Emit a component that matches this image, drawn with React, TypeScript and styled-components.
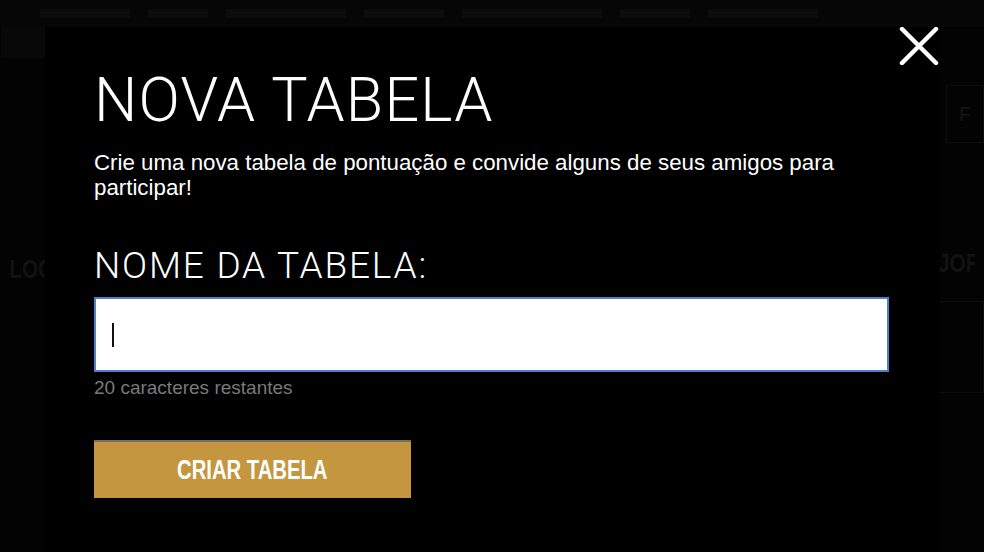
import React from "react";
import styled, { createGlobalStyle } from "styled-components";

const GlobalStyle = createGlobalStyle`
  html, body {
    margin:0;
    padding:0;
    background:#030303;
    height:100%;
    overflow:hidden;
  }
  #root {
    height:100%;
  }
`;

// faint page behind the overlay
const Page = styled.div`
  width:984px;
  height:552px;
  position:relative;
  display:flex;
  flex-direction:column;
  background:#030303;
  font-family:"Liberation Sans", Arial, sans-serif;
  overflow:hidden;
`;

const PageHeader = styled.div`
  height:27px;
  display:flex;
  align-items:center;
  gap:18px;
  padding:0 40px;
  background:#060606;
`;

const HeaderBlur = styled.span<{ w: number }>`
  display:block;
  width:${({ w }) => w}px;
  height:9px;
  background:#0c0c0c;
`;

const PageBody = styled.div`
  flex:1;
  display:flex;
  justify-content:space-between;
`;

const SideColumn = styled.div<{ side: "left" | "right" }>`
  width:46px;
  display:flex;
  flex-direction:column;
  align-items:${({ side }) => (side === "left" ? "flex-end" : "flex-start")};
  padding-top:${({ side }) => (side === "left" ? "0" : "58px")};
`;

const SideTab = styled.div`
  width:45px;
  height:31px;
  background:#080808;
`;

const SideBox = styled.div<{ h: number; inset: number; top?: number }>`
  width:${({ inset }) => 46 - inset}px;
  margin-left:${({ inset }) => inset}px;
  margin-top:${({ top = 0 }) => top}px;
  height:${({ h }) => h}px;
  border:1px solid #0c0c0c;
  box-sizing:border-box;
  display:flex;
  align-items:center;
  padding-left:12px;
  color:#151515;
  font-size:20px;
`;

const SideHeading = styled.div<{ top: number; align: "left" | "right" }>`
  margin-top:${({ top }) => top}px;
  width:100%;
  text-align:${({ align }) => align};
  color:#121212;
  font-size:26px;
  font-weight:700;
  white-space:nowrap;
  overflow:hidden;
  transform:scaleX(0.8);
  transform-origin:${({ align }) => align};
`;

// the modal
const Modal = styled.div`
  position:absolute;
  left:45px;
  top:27px;
  width:895px;
  height:525px;
  background:#000;
  box-sizing:border-box;
  padding:37px 51px 0 49px;
  display:flex;
  flex-direction:column;
  align-items:flex-start;
  font-family:"Liberation Sans", Arial, sans-serif;
  color:#fff;
`;

const CloseButton = styled.button`
  position:absolute;
  top:0;
  right:1px;
  width:40px;
  height:38px;
  padding:0;
  border:none;
  background:transparent;
  cursor:pointer;
  display:flex;
  align-items:center;
  justify-content:center;
`;

const Title = styled.h1`
  margin:0;
  font-family:Roboto, "Liberation Sans", sans-serif;
  font-weight:300;
  font-size:61px;
  line-height:72px;
  color:#fff;
  letter-spacing:1.2px;
`;

const Intro = styled.p`
  margin:14px 0 0;
  font-size:22.3px;
  line-height:25px;
  color:#fff;
`;

const Label = styled.label`
  display:block;
  margin-top:46px;
  font-family:Roboto, "Liberation Sans", sans-serif;
  font-weight:300;
  font-size:37px;
  line-height:40px;
  letter-spacing:1.8px;
  color:#fff;
`;

const InputWrap = styled.div`
  position:relative;
  align-self:stretch;
  margin-top:11px;
`;

const NameInput = styled.input`
  display:block;
  width:100%;
  height:75px;
  box-sizing:border-box;
  border:2px solid #4f7fcb;
  outline:none;
  background:#fff;
  padding:0 16px;
  font-family:"Liberation Sans", Arial, sans-serif;
  font-size:28px;
  color:#000;
`;

const CaretMark = styled.span`
  position:absolute;
  left:18px;
  top:50%;
  transform:translateY(-50%);
  width:2px;
  height:24px;
  background:#111;
`;

const Hint = styled.div`
  margin-top:5px;
  font-size:19px;
  line-height:22px;
  color:#7a7a7a;
`;

const SubmitButton = styled.button`
  margin-top:41px;
  width:317px;
  height:58px;
  border:none;
  border-top:2px solid #77705f;
  background:#c4963f;
  color:#fff;
  font-family:"Liberation Sans", Arial, sans-serif;
  font-weight:700;
  font-size:27px;
  cursor:pointer;
  padding:0;
  display:flex;
  align-items:center;
  justify-content:center;
`;

const ButtonText = styled.span`
  display:inline-block;
  transform:scaleX(0.75);
  white-space:nowrap;
`;

export default function App() {
  return (
    <>
      <GlobalStyle />
      <Page>
        <PageHeader>
          <HeaderBlur w={90} />
          <HeaderBlur w={60} />
          <HeaderBlur w={120} />
          <HeaderBlur w={80} />
          <HeaderBlur w={140} />
          <HeaderBlur w={70} />
          <HeaderBlur w={110} />
        </PageHeader>
        <PageBody>
          <SideColumn side="left">
            <SideTab />
            <SideHeading top={196} align="right">LOCAL</SideHeading>
          </SideColumn>
          <SideColumn side="right">
            <SideBox h={58} inset={8}>F</SideBox>
            <SideHeading top={105} align="left">JORE</SideHeading>
            <SideBox h={92} inset={0} top={22} />
          </SideColumn>
        </PageBody>

        <Modal role="dialog" aria-labelledby="nova-tabela">
          <CloseButton aria-label="Fechar">
            <svg width="40" height="38" viewBox="0 0 40 38">
              <path d="M3 2 L37 36 M37 2 L3 36" stroke="#fff" strokeWidth="4.5" strokeLinecap="round" />
            </svg>
          </CloseButton>
          <Title id="nova-tabela">NOVA TABELA</Title>
          <Intro>
            Crie uma nova tabela de pontuação e convide alguns de seus amigos para participar!
          </Intro>
          <Label htmlFor="nome-tabela">NOME DA TABELA:</Label>
          <InputWrap>
            <NameInput id="nome-tabela" type="text" maxLength={20} defaultValue="" />
            <CaretMark />
          </InputWrap>
          <Hint>20 caracteres restantes</Hint>
          <SubmitButton type="button">
            <ButtonText>CRIAR TABELA</ButtonText>
          </SubmitButton>
        </Modal>
      </Page>
    </>
  );
}
